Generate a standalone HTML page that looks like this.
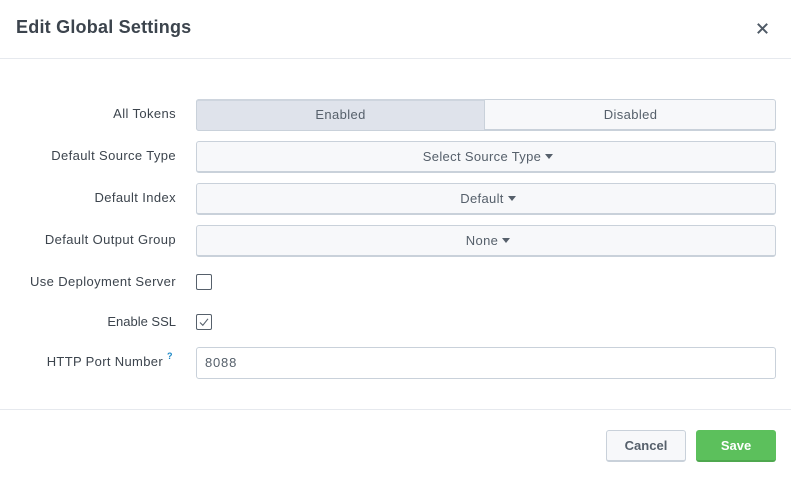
<!DOCTYPE html>
<html>
<head>
<meta charset="utf-8">
<style>
html,body{margin:0;padding:0;width:791px;height:477px;background:#fff;overflow:hidden}
body{position:relative;font-family:"Liberation Sans",sans-serif;color:#3c444d}
.a{position:absolute;box-sizing:border-box}
.hr{left:0;width:791px;height:1px;background:#e6e9ee}
.l{right:615px;font-size:13px;line-height:16px;white-space:nowrap;color:#3c444d;letter-spacing:.38px}
.b{left:196px;width:580px;height:32px;background:#f7f8fa;border:1px solid #c9d1da;border-bottom:2px solid #c9d1da;border-radius:3px;text-align:center;font-size:13px;line-height:30px;color:#56606b;letter-spacing:.33px;padding-left:4px}
.c{display:inline-block;width:0;height:0;border-left:4px solid transparent;border-right:4px solid transparent;border-top:5px solid #56606b;margin-left:4px;vertical-align:2px}
.cb{left:196px;width:16px;height:16px;border:1px solid #56606b;border-radius:2px;background:#fff}
</style>
</head>
<body>
<div class="a" style="left:16px;top:16px;font-size:18px;line-height:22px;font-weight:bold;color:#3c444d;white-space:nowrap;letter-spacing:.22px">Edit Global Settings</div>
<svg class="a" style="left:756px;top:22px" width="13" height="13" viewBox="0 0 13 13"><path d="M1.8 1.8L11.2 11.2M11.2 1.8L1.8 11.2" stroke="#4f5a66" stroke-width="2" fill="none"/></svg>
<div class="a hr" style="top:58px"></div>

<div class="a l" style="top:106px">All Tokens</div>
<div class="a b" style="top:99px"></div>
<div class="a" style="left:196px;top:99px;width:289px;height:32px;background:#dfe3eb;border:1px solid #c9d1da;border-top:2px solid #ced5de;border-radius:3px 0 0 3px;text-align:center;font-size:13px;line-height:27px;color:#56606b;letter-spacing:.38px">Enabled</div>
<div class="a" style="left:485px;top:99px;width:291px;height:32px;text-align:center;font-size:13px;line-height:31px;color:#56606b;letter-spacing:.38px">Disabled</div>

<div class="a l" style="top:148px">Default Source Type</div>
<div class="a b" style="top:141px">Select Source Type<span class="c"></span></div>

<div class="a l" style="top:190px">Default Index</div>
<div class="a b" style="top:183px">Default<span class="c"></span></div>

<div class="a l" style="top:232px">Default Output Group</div>
<div class="a b" style="top:225px">None<span class="c"></span></div>

<div class="a l" style="top:274px">Use Deployment Server</div>
<div class="a cb" style="top:274px"></div>

<div class="a l" style="top:314px;letter-spacing:0">Enable SSL</div>
<div class="a cb" style="top:314px"></div>
<svg class="a" style="left:196px;top:314px" width="16" height="16" viewBox="0 0 16 16"><path d="M4 8.5L6.8 11.3L12 4.8" stroke="#56606b" stroke-width="1.1" fill="none"/></svg>

<div class="a l" style="top:354px;right:628px;letter-spacing:.33px">HTTP Port Number</div>
<div class="a" style="left:167px;top:351px;font-size:9px;font-weight:bold;line-height:11px;color:#1a87c5">?</div>
<div class="a" style="left:196px;top:347px;width:580px;height:32px;background:#fff;border:1px solid #c9d1da;border-radius:3px;font-size:13px;line-height:30px;padding-left:8px;color:#56606b;letter-spacing:.8px">8088</div>

<div class="a hr" style="top:409px"></div>
<div class="a" style="left:606px;top:430px;width:80px;height:32px;background:#f7f8fa;border:1px solid #c9d1da;border-bottom:2px solid #c9d1da;border-radius:3px;text-align:center;font-size:13px;font-weight:bold;line-height:29px;color:#56606b">Cancel</div>
<div class="a" style="left:696px;top:430px;width:80px;height:32px;background:#5cc05c;border-bottom:2px solid #4fa84f;border-radius:3px;text-align:center;font-size:13px;font-weight:bold;line-height:31px;color:#fff">Save</div>
</body>
</html>
